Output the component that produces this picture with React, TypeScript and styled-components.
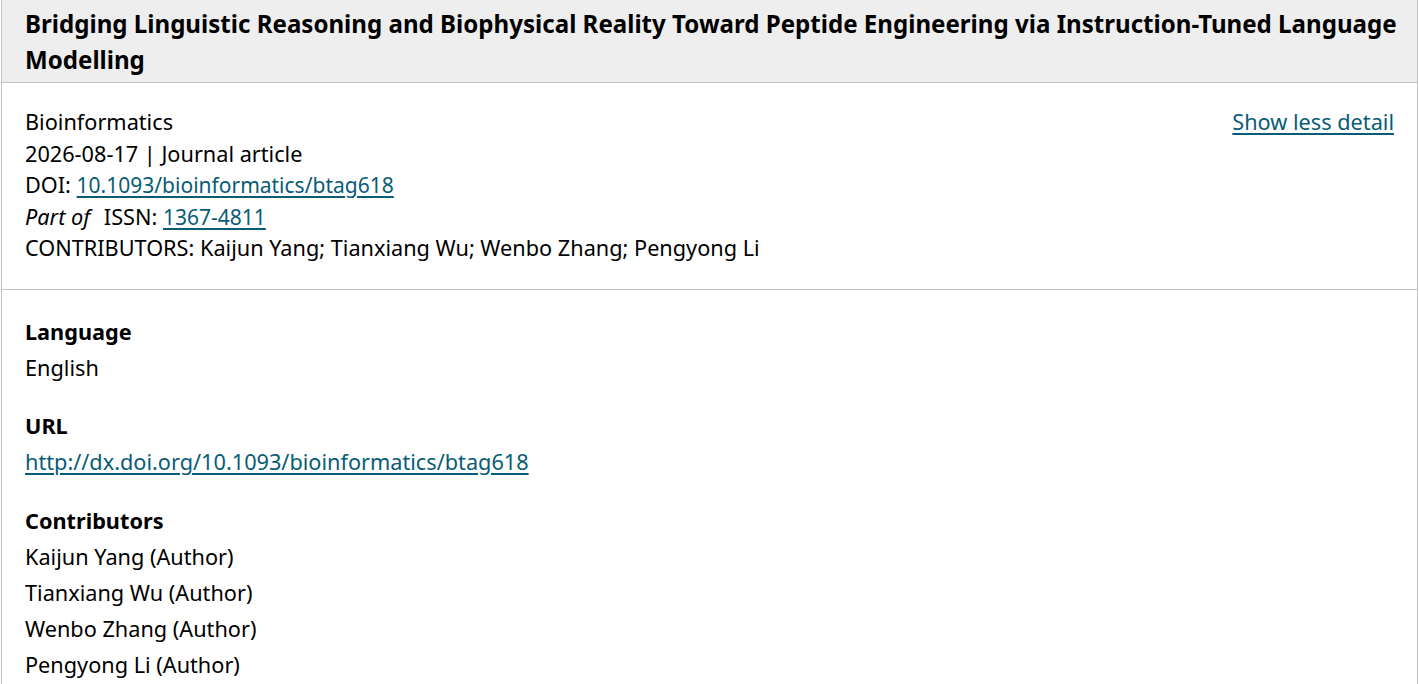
import React from "react";
import styled, { createGlobalStyle } from "styled-components";

const GlobalStyle = createGlobalStyle`
  body {
    margin: 0;
    background: #fff;
    font-family: "Noto Sans", "Open Sans", sans-serif;
    color: #000;
  }
`;

const contributors = ["Kaijun Yang", "Tianxiang Wu", "Wenbo Zhang", "Pengyong Li"];

export default function App() {
  return (
    <>
      <GlobalStyle />
      <Card>
        <Header>
          <Title>
            Bridging Linguistic Reasoning and Biophysical Reality Toward Peptide Engineering via
            Instruction-Tuned Language Modelling
          </Title>
        </Header>
        <Summary>
          <div>
            <Line>Bioinformatics</Line>
            <Line>2026-08-17 | Journal article</Line>
            <Line>
              DOI: <InlineLink href="#">10.1093/bioinformatics/btag618</InlineLink>
            </Line>
            <Line>
              <PartOf>Part of</PartOf> ISSN: <InlineLink href="#">1367-4811</InlineLink>
            </Line>
            <Line>CONTRIBUTORS: {contributors.join("; ")}</Line>
          </div>
          <Link href="#">Show less detail</Link>
        </Summary>
        <Details>
          <Field>
            <Label>Language</Label>
            <Value>English</Value>
          </Field>
          <Field>
            <Label>URL</Label>
            <Value>
              <Link href="#">http://dx.doi.org/10.1093/bioinformatics/btag618</Link>
            </Value>
          </Field>
          <Field>
            <Label>Contributors</Label>
            {contributors.map((c) => (
              <Value key={c}>{c} (Author)</Value>
            ))}
          </Field>
        </Details>
      </Card>
    </>
  );
}

const Card = styled.div`
  margin: 0 1px;
  border: 1px solid #c4c4c4;
  border-top: none;
  border-radius: 0 0 4px 4px;
  font-size: 21.7px;
`;

const Header = styled.div`
  background: #eeeeee;
  border-bottom: 1px solid #c4c4c4;
  padding: 6px 14px 4px 23px;
`;

const Title = styled.h3`
  margin: 0;
  font-size: 24.1px;
  font-weight: 700;
  line-height: 36px;
`;

const Summary = styled.div`
  display: flex;
  justify-content: space-between;
  align-items: flex-start;
  padding: 23px 23px 25px;
  border-bottom: 1px solid #c4c4c4;
  line-height: 31.5px;
`;

const Line = styled.div``;

const PartOf = styled.em`
  margin-right: 8px;
`;

const Link = styled.a`
  color: #085c77;
  text-decoration: underline;
  text-underline-offset: 3px;
`;

const InlineLink = styled(Link)`
  font-size: 21px;
  line-height: 1;
`;

const Details = styled.div`
  padding: 24px 23px;
`;

const Field = styled.div`
  margin-bottom: 22.5px;
`;

const Label = styled.div`
  font-weight: 700;
  line-height: 36px;
`;

const Value = styled.div`
  line-height: 36px;
`;
